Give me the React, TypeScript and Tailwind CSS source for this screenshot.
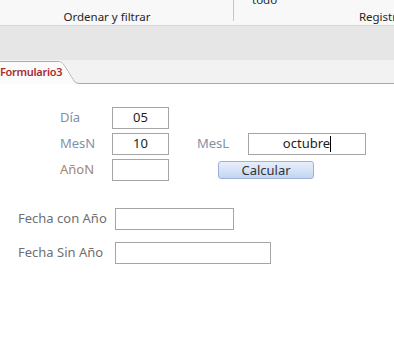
import React from "react";

const font = { fontFamily: '"Segoe UI", "Noto Sans", "Open Sans", sans-serif' };

function Box({ value, className, caret }: { value?: string; className: string; caret?: boolean }) {
  return (
    <div className={`flex h-[22px] items-center justify-center border border-[#a5a5a5] bg-white text-[13px] text-[#222] ${className}`}>
      <span>{value}</span>
      {caret ? <span className="h-[16px] w-px bg-black" /> : null}
    </div>
  );
}

export default function App() {
  return (
    <div className="h-[345px] w-[394px] overflow-hidden bg-white" style={font}>
      {/* ribbon */}
      <div className="relative h-[26px] border-b border-[#d5d5d5] bg-[#f8f8f8] text-[11.5px] text-[#262626]">
        <div className="flex h-full">
          <div className="flex w-[214px] items-end justify-center">Ordenar y filtrar</div>
          <div className="ml-[19px] mb-[4px] w-px bg-[#c6c6c6]" />
          <div className="-mr-[3px] flex flex-1 items-end justify-end">Registr</div>
        </div>
        <span className="absolute left-[252px] top-[-9px]">todo</span>
      </div>
      <div className="h-[34px] bg-[#e6e6e6]" />
      {/* tabs */}
      <div className="relative flex h-[24px] items-end border-b border-[#a9a9a9] bg-[#f2f2f2]">
        <svg className="absolute bottom-[-1px] left-0" width="80" height="24" viewBox="0 0 80 24">
          <path d="M0 1.5 H58 Q62 1.5 64 5 L74 21 Q76 23.5 79 23.5" fill="#fbfbfb" stroke="#b0aca4" strokeWidth="1" />
          <path d="M0 2 H58 Q62 2 63.6 5 L73.6 21 Q75.5 24 79 24 L0 24 Z" fill="#fbfbfb" />
        </svg>
        <div className="relative mb-[1px] flex h-[20px] items-center text-[11px] font-semibold tracking-[-0.3px] text-[#ab2b31]">
          Formulario3
        </div>
      </div>
      {/* form */}
      <div className="pt-[23px] text-[13px]">
        <div className="flex items-center">
          <span className="ml-[60px] w-[52px] text-[#8291a9]">Día</span>
          <Box value="05" className="w-[57px]" />
        </div>
        <div className="mt-[4px] flex items-center">
          <span className="ml-[60px] w-[52px] text-[#8291a9]">MesN</span>
          <Box value="10" className="w-[57px]" />
          <span className="ml-[28px] w-[51px] text-[#8291a9]">MesL</span>
          <Box value="octubre" className="w-[118px]" caret />
        </div>
        <div className="mt-[4px] flex items-center">
          <span className="ml-[60px] w-[52px] text-[#9e8873]">AñoN</span>
          <Box className="w-[57px]" />
          <button className="ml-[49px] h-[18px] w-[96px] rounded-[3px] border border-[#9cb1d6] bg-gradient-to-b from-[#e8effb] to-[#c4d5f2] text-[13px] leading-none text-[#333]">
            Calcular
          </button>
        </div>
        <div className="mt-[27px] flex items-center">
          <span className="ml-[18px] w-[97px] text-[#6f6f6f]">Fecha con Año</span>
          <Box className="w-[119px]" />
        </div>
        <div className="mt-[12px] flex items-center">
          <span className="ml-[18px] w-[97px] text-[#6f6f6f]">Fecha Sin Año</span>
          <Box className="w-[156px]" />
        </div>
      </div>
    </div>
  );
}
